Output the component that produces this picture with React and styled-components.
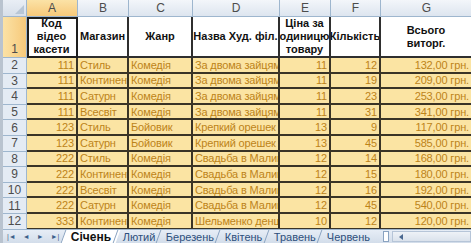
import React from "react";
import styled, { createGlobalStyle } from "styled-components";

const GlobalStyle = createGlobalStyle`
  html, body {
    margin: 0;
    padding: 0;
    background: #ffffff;
    overflow: hidden;
  }
`;

const columns = ["A", "B", "C", "D", "E", "F", "G"];

const headers = [
  { text: ["Код", "відео", "касети"] },
  { text: ["Магазин"] },
  { text: ["Жанр"] },
  { text: ["Назва Худ. філ."] },
  { text: ["Ціна за", "одиницю", "товару"] },
  { text: ["Кількість"] },
  { text: ["Всього", "виторг."] },
];

const rows = [
  [111, "Стиль", "Комедія", "За двома зайцями", 11, 12, "132,00 грн."],
  [111, "Континент", "Комедія", "За двома зайцями", 11, 19, "209,00 грн."],
  [111, "Сатурн", "Комедія", "За двома зайцями", 11, 23, "253,00 грн."],
  [111, "Всесвіт", "Комедія", "За двома зайцями", 11, 31, "341,00 грн."],
  [123, "Стиль", "Бойовик", "Крепкий орешек", 13, 9, "117,00 грн."],
  [123, "Сатурн", "Бойовик", "Крепкий орешек", 13, 45, "585,00 грн."],
  [222, "Стиль", "Комедія", "Свадьба в Малиновке", 12, 14, "168,00 грн."],
  [222, "Континент", "Комедія", "Свадьба в Малиновке", 12, 15, "180,00 грн."],
  [222, "Всесвіт", "Комедія", "Свадьба в Малиновке", 12, 16, "192,00 грн."],
  [222, "Сатурн", "Комедія", "Свадьба в Малиновке", 12, 45, "540,00 грн."],
  [333, "Континент", "Комедія", "Шельменко денщик", 10, 12, "120,00 грн."],
];

const numeric = [true, false, false, false, true, true, true];

const tabs = ["Січень", "Лютий", "Березень", "Квітень", "Травень", "Червень"];

const Window = styled.div`
  width: 471px;
  height: 243px;
  display: flex;
  flex-direction: column;
  border-left: 3px solid #b9c3cf;
  box-sizing: border-box;
  font-family: "Liberation Sans", Arial, sans-serif;
`;

const Sheet = styled.div`
  flex: 1;
  overflow: hidden;
  display: grid;
  grid-template-columns: 24px 51px 51px 64px 87px 51px 50px 92px;
  grid-template-rows: 17px 41px repeat(11, 15.6px);
`;

const Corner = styled.div`
  background: linear-gradient(#e9eef5, #d7dfea);
  border-right: 1px solid #9eb6ce;
  border-bottom: 1px solid #9eb6ce;
  position: relative;
  &::after {
    content: "";
    position: absolute;
    right: 2px;
    bottom: 2px;
    border-left: 9px solid transparent;
    border-bottom: 9px solid #b8c6d6;
  }
`;

const ColHead = styled.div`
  display: flex;
  align-items: center;
  justify-content: center;
  font-size: 12px;
  color: #4c4c4c;
  background: ${(p) =>
    p.$active
      ? "linear-gradient(#fbe2a6, #f7c97a)"
      : "linear-gradient(#f3f6fa, #dde5ef)"};
  border-right: 1px solid #9eb6ce;
  border-bottom: 1px solid #9eb6ce;
`;

const RowHead = styled.div`
  display: flex;
  align-items: ${(p) => (p.$bottom ? "flex-end" : "center")};
  justify-content: center;
  font-size: 12px;
  color: #4c4c4c;
  padding-bottom: ${(p) => (p.$bottom ? "1px" : "0")};
  background: ${(p) =>
    p.$active ? "linear-gradient(90deg, #fbe2a6, #f7c97a)" : "#e4ebf4"};
  border-right: 1px solid #9eb6ce;
  border-bottom: 1px solid #9eb6ce;
`;

const HeadCell = styled.div`
  display: flex;
  flex-direction: column;
  align-items: center;
  justify-content: center;
  font-weight: bold;
  font-size: 11px;
  line-height: 13px;
  color: #111;
  background: #ffffff;
  border-right: 2px solid #2f2f2f;
  border-bottom: 2px solid #2f2f2f;
  overflow: hidden;
  white-space: nowrap;
  box-sizing: border-box;
  ${(p) => p.$selected && "outline: 2px solid #1e1e1e; outline-offset: -2px;"}
`;

const Cell = styled.div`
  display: flex;
  align-items: center;
  justify-content: ${(p) => (p.$num ? "flex-end" : "flex-start")};
  padding: 0 2px;
  font-size: 11px;
  letter-spacing: -0.15px;
  color: #bd8319;
  background: #fbe4a3;
  border-right: 2px solid #3a3426;
  border-bottom: 2px solid #3a3426;
  white-space: nowrap;
  overflow: hidden;
  box-sizing: border-box;
`;

const TabBar = styled.div`
  height: 13px;
  display: flex;
  align-items: stretch;
  background: linear-gradient(#e6edf6, #d3ddea);
  border-top: 1px solid #9eb6ce;
  font-size: 11px;
`;

const Nav = styled.div`
  display: flex;
  align-items: center;
  gap: 7px;
  padding: 0 8px 0 4px;
  color: #3e5f8a;
  font-size: 7px;
`;

const Tab = styled.div`
  display: flex;
  align-items: center;
  padding: 0 7px;
  margin-left: -4px;
  color: ${(p) => (p.$active ? "#111" : "#2d4f7c")};
  font-weight: ${(p) => (p.$active ? "bold" : "normal")};
  font-size: ${(p) => (p.$active ? "12px" : "11px")};
  background: ${(p) => (p.$active ? "#ffffff" : "transparent")};
  border-left: 1px solid #8aa3c1;
  transform: skewX(-20deg);
  & > span {
    transform: skewX(20deg);
  }
`;

const Splitter = styled.div`
  width: 4px;
  margin: 1px 3px 1px 6px;
  background: #ffffff;
  border: 1px solid #8aa3c1;
`;

const Scroll = styled.div`
  flex: 1;
  display: flex;
  align-items: center;
  margin: 1px 0;
  background: linear-gradient(#eef2f7, #dae2ec);
  border: 1px solid #b6c5d8;
`;

const Arrow = styled.div`
  width: 0;
  height: 0;
  margin: 0 6px;
  border-top: 3px solid transparent;
  border-bottom: 3px solid transparent;
  border-right: 4px solid #4a6890;
`;

export default function App() {
  return (
    <>
      <GlobalStyle />
      <Window>
        <Sheet>
          <Corner />
          {columns.map((c, i) => (
            <ColHead key={c} $active={i === 0}>
              {c}
            </ColHead>
          ))}
          <RowHead $active $bottom>
            1
          </RowHead>
          {headers.map((h, i) => (
            <HeadCell key={i} $selected={i === 0}>
              {h.text.map((t) => (
                <div key={t}>{t}</div>
              ))}
            </HeadCell>
          ))}
          {rows.map((r, ri) => (
            <React.Fragment key={ri}>
              <RowHead>{ri + 2}</RowHead>
              {r.map((v, ci) => (
                <Cell key={ci} $num={numeric[ci]}>
                  {v}
                </Cell>
              ))}
            </React.Fragment>
          ))}
        </Sheet>
        <TabBar>
          <Nav>
            <span>|◄</span>
            <span>◄</span>
            <span>►</span>
            <span>►|</span>
          </Nav>
          {tabs.map((t, i) => (
            <Tab key={t} $active={i === 0}>
              <span>{t}</span>
            </Tab>
          ))}
          <Splitter />
          <Scroll>
            <Arrow />
          </Scroll>
        </TabBar>
      </Window>
    </>
  );
}
